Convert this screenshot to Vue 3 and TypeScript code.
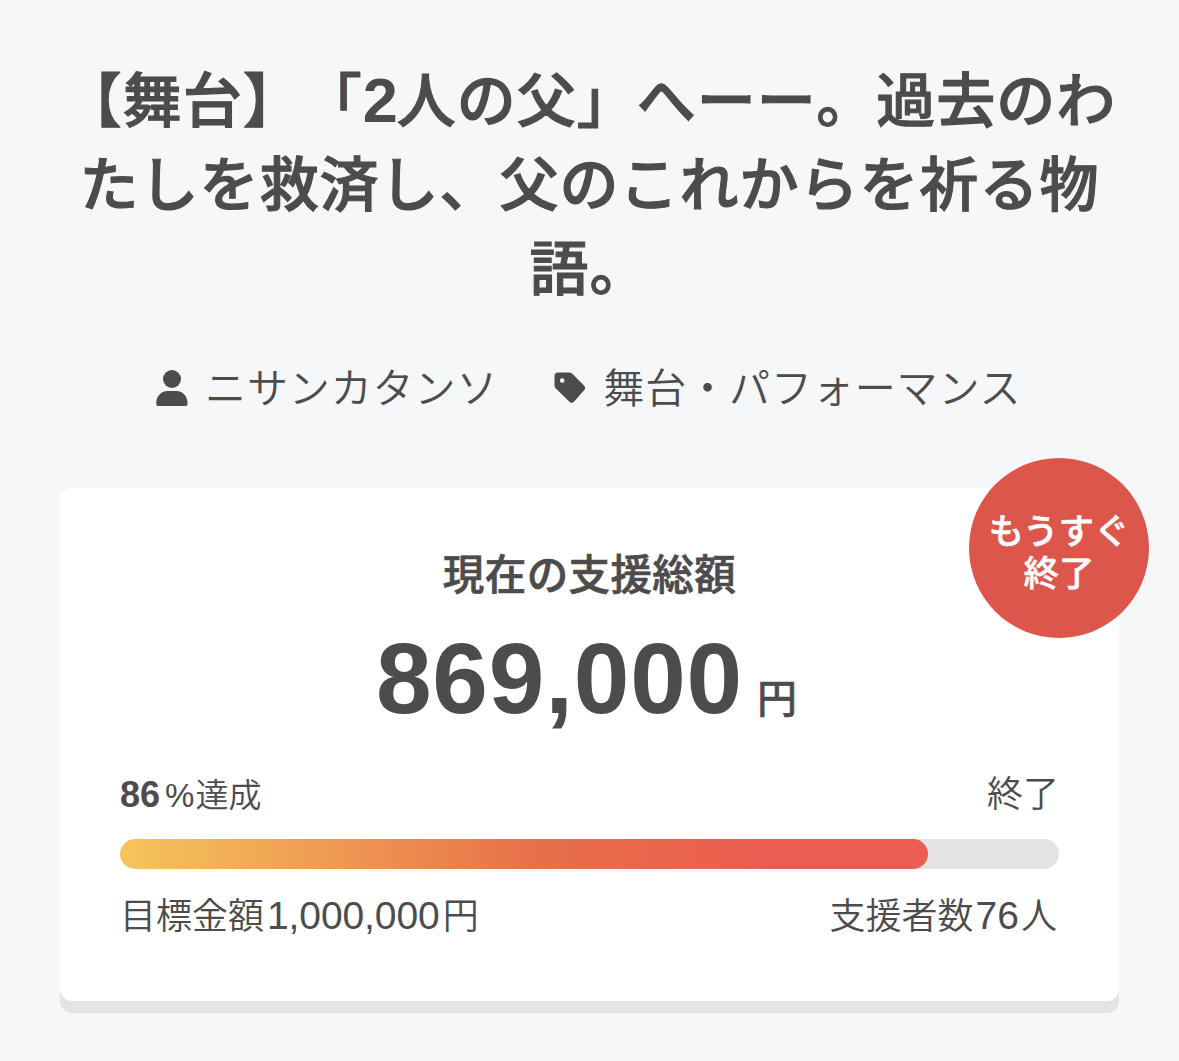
<script setup lang="ts">
const project = {
  titleLines: ['【舞台】「2人の父」へーー。過去のわ', 'たしを救済し、父のこれからを祈る物', '語。'],
  owner: 'ニサンカタンソ',
  category: '舞台・パフォーマンス',
  total: '869,000',
  goal: '1,000,000',
  percent: 86,
  supporters: 76,
}

// Digits are set in a heavier weight than the surrounding kana and kanji.
const titleParts = project.titleLines.map((line) =>
  line
    .split(/(\d+)/)
    .filter(Boolean)
    .map((text) => ({ text, digit: /^\d/.test(text) })),
)
</script>

<template>
  <main class="page" lang="ja">
    <h1 class="title">
      <span v-for="(parts, i) in titleParts" :key="i" class="title-line"
        ><span v-for="(part, j) in parts" :key="j" :class="{ digit: part.digit }">{{ part.text }}</span></span
      >
    </h1>

    <div class="meta">
      <span class="meta-item">
        <svg class="user-icon" viewBox="0 0 32 36" width="32" height="36" aria-hidden="true">
          <circle cx="16" cy="9" r="9" />
          <path d="M0.200 33.500C0.200 26.500 5 21 11.500 21h9C27 21 31.600 26.500 31.600 33.500V34q0 2-2 2H2.200q-2 0-2-2z" />
        </svg>
        <span class="meta-text">{{ project.owner }}</span>
      </span>
      <span class="meta-item category">
        <svg class="tag-icon" viewBox="0 0 32 32" width="32" height="32" aria-hidden="true">
          <path
            fill-rule="evenodd"
            d="M4 .5h11.200q1.800 0 3.100 1.300l11.700 11.800q2.300 2.300 0 4.600L20 29.800q-2.300 2.300-4.600 0L1.800 16.500Q.5 15.200.5 13.300V4Q.5.500 4 .5zM8.200 6.200a2.300 2.300 0 1 0 0 4.600a2.300 2.300 0 1 0 0-4.600z"
          />
        </svg>
        <span class="meta-text">{{ project.category }}</span>
      </span>
    </div>

    <section class="card">
      <div class="badge"><span>もうすぐ</span><span>終了</span></div>
      <h2 class="heading">現在の支援総額</h2>
      <p class="total"><strong>{{ project.total }}</strong><span class="yen">円</span></p>
      <div class="row status">
        <span class="rate"><b>{{ project.percent }}</b><span class="pct">%</span>達成</span>
        <span class="state">終了</span>
      </div>
      <div class="bar"><div class="fill" :style="{ width: project.percent + '%' }"></div></div>
      <div class="row foot">
        <span>目標金額<span class="num goal">{{ project.goal }}</span>円</span>
        <span>支援者数<span class="num people">{{ project.supporters }}</span>人</span>
      </div>
    </section>
  </main>
</template>

<style>
body {
  margin: 0;
  background: #f5f7f9;
}
</style>

<style scoped>
.page {
  box-sizing: border-box;
  width: 1179px;
  height: 1061px;
  padding: 60px 60px 0;
  overflow: hidden;
  color: #4d4b4c;
  background: #f5f7f9;
  font-family: 'Liberation Sans', 'Noto Sans CJK JP', sans-serif;
  font-weight: 350;
  text-spacing-trim: space-all;
}
.title {
  margin: 0;
  font-size: 59px;
  font-weight: 500;
  line-height: 84px;
  letter-spacing: 1px;
  text-align: center;
  -webkit-text-stroke: 1.1px currentColor;
}
.title-line {
  display: block;
  white-space: nowrap;
}
.digit {
  font-size: 63px;
  font-weight: 700;
  line-height: 1;
  letter-spacing: -1px;
  -webkit-text-stroke: 0;
}
.meta {
  display: flex;
  margin: 46px 0 0 96px;
  height: 60px;
}
.meta-item {
  display: flex;
  align-items: center;
}
.meta-text {
  margin-left: 17px;
  padding-top: 2px;
  font-size: 41px;
  line-height: 60px;
  letter-spacing: 0.9px;
  white-space: nowrap;
}
.category {
  margin-left: 56px;
}
svg {
  display: block;
  flex: none;
  fill: #4d4b4c;
}
.card {
  position: relative;
  box-sizing: border-box;
  height: 513px;
  margin-top: 70px;
  padding: 58px 60px 0;
  border-radius: 12px;
  background: #fff;
  box-shadow: 0 12px 0 #e3e3e3;
}
.badge {
  position: absolute;
  top: -30px;
  right: -30px;
  display: flex;
  flex-direction: column;
  align-items: center;
  justify-content: center;
  box-sizing: border-box;
  width: 180px;
  height: 180px;
  padding-top: 10px;
  border-radius: 50%;
  color: #fff;
  background: #dc564c;
  font-size: 35.500px;
  font-weight: 500;
  line-height: 42px;
  -webkit-text-stroke: 0.5px currentColor;
}
.heading {
  margin: 0;
  font-size: 41.500px;
  font-weight: 500;
  line-height: 60px;
  letter-spacing: 0.4px;
  text-align: center;
  -webkit-text-stroke: 0.7px currentColor;
}
.total {
  display: flex;
  justify-content: center;
  align-items: baseline;
  margin: 14px 6px 0 0;
  height: 116px;
  line-height: 116px;
}
.total strong {
  font-size: 100px;
  font-weight: 700;
  letter-spacing: 0.8px;
}
.yen {
  margin-left: 14px;
  font-size: 40px;
  font-weight: 500;
  -webkit-text-stroke: 0.4px currentColor;
}
.row {
  display: flex;
  justify-content: space-between;
}
.status {
  height: 60px;
  margin-top: 29px;
  line-height: 60px;
}
.rate {
  font-size: 33px;
}
.rate b {
  font-size: 36px;
  font-weight: 700;
}
.pct {
  margin: 0 1px 0 5px;
}
.state {
  font-size: 36px;
}
.bar {
  height: 30px;
  margin-top: 14px;
  overflow: hidden;
  border-radius: 15px;
  background: #e3e3e3;
}
.fill {
  height: 100%;
  border-radius: 15px;
  background: linear-gradient(90deg, #f5c55b 0%, #e86f49 52%, #eb5d50 80%);
}
.foot {
  margin-top: 17px;
  padding-right: 2px;
  font-size: 36px;
  line-height: 60px;
}
.num {
  font-size: 39px;
}
.goal {
  margin: 0 3px;
  letter-spacing: -0.1px;
}
.people {
  margin: 0 2px;
}
</style>
